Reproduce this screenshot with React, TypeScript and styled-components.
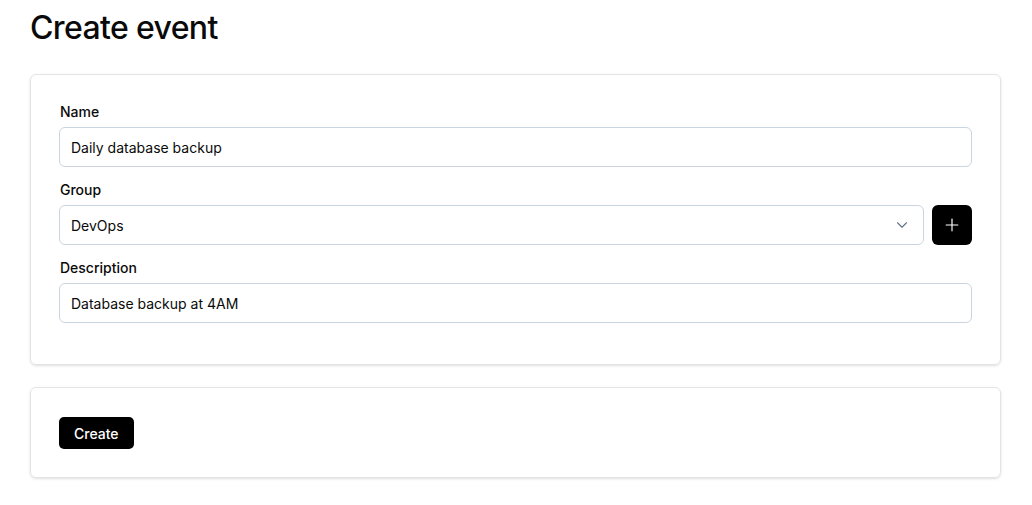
import styled, { createGlobalStyle } from 'styled-components'

const GlobalStyle = createGlobalStyle`
  * {
    box-sizing: border-box;
  }

  body {
    margin: 0;
    font-family: Inter, 'Liberation Sans', sans-serif;
    color: #0a0a0a;
    background: #ffffff;
  }
`

const Page = styled.main`
  padding: 0 31px 0 30px;
  display: flex;
  flex-direction: column;
`

const Title = styled.h1`
  margin: 0;
  padding-top: 8px;
  font-size: 32px;
  line-height: 40px;
  font-weight: 500;
  letter-spacing: -0.02em;
  margin-bottom: 26px;
`

const Card = styled.section<{ $padTop?: number }>`
  border: 1px solid #e4e4e7;
  border-radius: 6px;
  box-shadow: 0 1px 3px rgba(0, 0, 0, 0.1), 0 1px 2px -1px rgba(0, 0, 0, 0.1);
  padding: 28px;
  padding-top: ${(props) => props.$padTop ?? 28}px;
  display: flex;
  flex-direction: column;
  gap: 13px;
  margin-bottom: 22px;
`

const Field = styled.div`
  display: flex;
  flex-direction: column;
  gap: 5px;

  &:last-child {
    margin-bottom: 13px;
  }
`

const Label = styled.label`
  font-size: 14px;
  line-height: 20px;
  font-weight: 500;
  padding-left: 1px;
`

const Row = styled.div`
  display: flex;
  gap: 8px;
`

const Input = styled.input`
  height: 40px;
  width: 100%;
  border: 1px solid #cbd5e1;
  border-radius: 6px;
  padding: 0 11px;
  font-family: inherit;
  font-size: 14px;
  color: #0a0a0a;
  background: #ffffff;
  outline: none;
`

const SelectBox = styled.div`
  flex: 1;
  height: 40px;
  border: 1px solid #cbd5e1;
  border-radius: 6px;
  padding: 0 12px 0 11px;
  font-size: 14px;
  display: flex;
  align-items: center;
  justify-content: space-between;

  svg {
    color: #64748b;
  }
`

const IconButton = styled.button`
  width: 40px;
  height: 40px;
  flex-shrink: 0;
  border: none;
  border-radius: 6px;
  background: #000000;
  color: #ffffff;
  display: flex;
  align-items: center;
  justify-content: center;
  padding: 0;
  cursor: pointer;
`

const PrimaryButton = styled.button`
  align-self: flex-start;
  height: 32px;
  padding: 0 15px;
  border: none;
  border-radius: 5px;
  background: #000000;
  color: #ffffff;
  font-family: inherit;
  font-size: 14px;
  font-weight: 500;
  cursor: pointer;
`

export default function App() {
  return (
    <>
      <GlobalStyle />
      <Page>
        <Title>Create event</Title>
        <Card $padTop={27}>
          <Field>
            <Label>Name</Label>
            <Input defaultValue="Daily database backup" />
          </Field>
          <Field>
            <Label>Group</Label>
            <Row>
              <SelectBox>
                <span>DevOps</span>
                <svg width="18" height="18" viewBox="0 0 24 24" fill="none" stroke="currentColor" strokeWidth="1.5" strokeLinecap="round" strokeLinejoin="round">
                  <path d="m6 9 6 6 6-6" />
                </svg>
              </SelectBox>
              <IconButton>
                <svg width="20" height="20" viewBox="0 0 24 24" fill="none" stroke="currentColor" strokeWidth="1.4" strokeLinecap="round">
                  <path d="M5 12h14" />
                  <path d="M12 5v14" />
                </svg>
              </IconButton>
            </Row>
          </Field>
          <Field>
            <Label>Description</Label>
            <Input defaultValue="Database backup at 4AM" />
          </Field>
        </Card>
        <Card $padTop={29}>
          <PrimaryButton>Create</PrimaryButton>
        </Card>
      </Page>
    </>
  )
}
